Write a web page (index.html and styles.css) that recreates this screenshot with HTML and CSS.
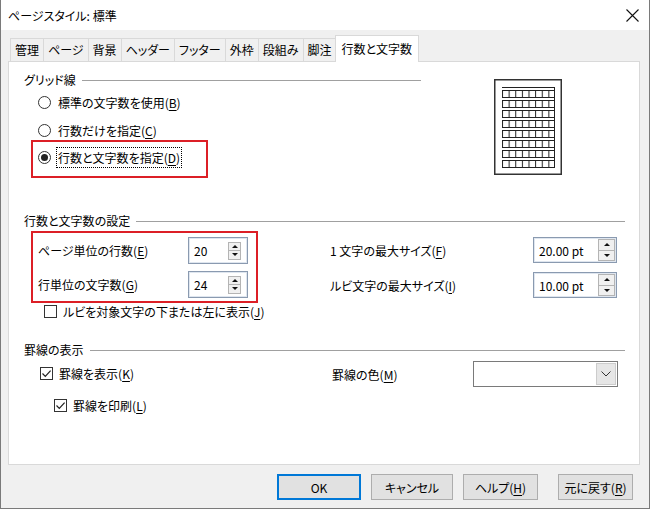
FILE: index.html
```html
<!DOCTYPE html>
<html lang="ja">
  <head>
    <meta charset="utf-8">
    <title>ページスタイル: 標準</title>
    <link rel="stylesheet" href="styles.css">
  </head>
  <body>
    <div class="window">

      <div class="titlebar">
        <span>ページスタイル: 標準</span>
        <svg class="close" width="13" height="13" viewBox="0 0 13 13">
          <path d="M0.5 0.5L12.5 12.5M12.5 0.5L0.5 12.5" stroke="#111" stroke-width="1.1" fill="none"/>
        </svg>
      </div>

      <div class="body">
        <div class="tabs">
          <div class="tab">管理</div>
          <div class="tab">ページ</div>
          <div class="tab">背景</div>
          <div class="tab">ヘッダー</div>
          <div class="tab">フッター</div>
          <div class="tab">外枠</div>
          <div class="tab">段組み</div>
          <div class="tab">脚注</div>
          <div class="tab active">行数と文字数</div>
        </div>

        <div class="panel">

          <!-- grid lines -->
          <div class="grid-group">
            <div class="grid-options">
              <div class="group-title">グリッド線</div>
              <div class="option first">
                <span class="radio"></span>
                <span>標準の文字数を使用(<u>B</u>)</span>
              </div>
              <div class="option">
                <span class="radio"></span>
                <span>行数だけを指定(<u>C</u>)</span>
              </div>
              <div class="callout callout-mode">
                <div class="option">
                  <span class="radio checked"></span>
                  <span class="focus">行数と文字数を指定(<u>D</u>)</span>
                </div>
              </div>
            </div>

            <svg class="preview" width="68" height="96" viewBox="0 0 68 96">
              <defs>
                <pattern id="cell" width="6.625" height="10" patternUnits="userSpaceOnUse" x="8" y="8">
                  <path d="M0 0.5H6.625M0 3.5H6.625M0.5 3.5V10" stroke="#222" stroke-width="1" fill="none"/>
                </pattern>
              </defs>
              <rect x="0.75" y="0.75" width="66.5" height="94.5" fill="#fff" stroke="#333" stroke-width="1.5"/>
              <rect x="8" y="8" width="53" height="80" fill="url(#cell)"/>
              <path d="M60.5 8V89M8 88.5H61" stroke="#222" stroke-width="1" fill="none"/>
            </svg>
          </div>

          <!-- lines and characters -->
          <div class="group-title section">行数と文字数の設定</div>
          <div class="size-row">
            <div class="callout callout-size">
              <div class="field">
                <span class="field-label">ページ単位の行数(<u>E</u>)</span>
                <div class="spin">
                  <span>20</span>
                  <span class="spin-btns"><span class="up"></span><span class="down"></span></span>
                </div>
              </div>
              <div class="field">
                <span class="field-label">行単位の文字数(<u>G</u>)</span>
                <div class="spin">
                  <span>24</span>
                  <span class="spin-btns"><span class="up"></span><span class="down"></span></span>
                </div>
              </div>
            </div>

            <div class="size-right">
              <div class="field">
                <span class="field-label wide">1 文字の最大サイズ(<u>F</u>)</span>
                <div class="spin pt">
                  <span>20.00 pt</span>
                  <span class="spin-btns"><span class="up"></span><span class="down"></span></span>
                </div>
              </div>
              <div class="field">
                <span class="field-label wide">ルビ文字の最大サイズ(<u>I</u>)</span>
                <div class="spin pt">
                  <span>10.00 pt</span>
                  <span class="spin-btns"><span class="up"></span><span class="down"></span></span>
                </div>
              </div>
            </div>
          </div>

          <div class="check-row ruby">
            <span class="checkbox"></span>
            <span>ルビを対象文字の下または左に表示(<u>J</u>)</span>
          </div>

          <!-- ruled lines -->
          <div class="group-title section rules-title">罫線の表示</div>
          <div class="rules">
            <div class="rules-left">
              <div class="check-row show">
                <span class="checkbox">
                  <svg width="11" height="11" viewBox="0 0 11 11"><path d="M1.5 5.5L4.3 8.4L9.6 2.6" stroke="#222" stroke-width="1.2" fill="none"/></svg>
                </span>
                <span>罫線を表示(<u>K</u>)</span>
              </div>
              <div class="check-row print">
                <span class="checkbox">
                  <svg width="11" height="11" viewBox="0 0 11 11"><path d="M1.5 5.5L4.3 8.4L9.6 2.6" stroke="#222" stroke-width="1.2" fill="none"/></svg>
                </span>
                <span>罫線を印刷(<u>L</u>)</span>
              </div>
            </div>
            <div class="rules-right">
              <span class="color-label">罫線の色(<u>M</u>)</span>
              <div class="dropdown">
                <span class="drop-btn">
                  <svg width="10" height="6" viewBox="0 0 10 6"><path d="M0.5 0.5L5 5L9.5 0.5" stroke="#333" stroke-width="1" fill="none"/></svg>
                </span>
              </div>
            </div>
          </div>

        </div>

        <div class="buttons">
          <div class="btn default">OK</div>
          <div class="btn cancel">キャンセル</div>
          <div class="btn">ヘルプ(<u>H</u>)</div>
          <div class="btn reset">元に戻す(<u>R</u>)</div>
        </div>
      </div>

    </div>
  </body>
</html>
```

FILE: styles.css
```css
  body {
    margin: 0;
    font-family: "Noto Sans CJK JP", "Noto Sans", sans-serif;
    font-size: 12px;
    font-feature-settings: "palt";
    color: #000000;
    background: #ffffff;
  }

  u {
    text-decoration-thickness: 1px;
    text-underline-offset: 2px;
  }

  .window {
    width: 650px;
    height: 509px;
    box-sizing: border-box;
    border: 1px solid #7a7a7a;
    border-top: none;
    background: #f0f0f0;
    display: flex;
    flex-direction: column;
  }

  .titlebar {
    height: 30px;
    background: #ffffff;
    display: flex;
    align-items: center;
    justify-content: space-between;
    padding: 0 10px 0 7px;
  }

  .close {
    display: block;
  }

  /* tabs */

  .tabs {
    height: 31px;
    margin-left: 9px;
    display: flex;
    align-items: flex-end;
  }

  .tab {
    height: 23px;
    box-sizing: border-box;
    line-height: 21px;
    padding: 0 4px;
    border: 1px solid #d9d9d9;
    border-bottom: none;
    margin-right: -1px;
    background: #f0f0f0;
    white-space: nowrap;
  }

  .tab.active {
    position: relative;
    z-index: 1;
    height: 27px;
    line-height: 25px;
    margin: 0 -2px -1px -1px;
    padding: 0 6px;
    background: #ffffff;
  }

  /* panel */

  .panel {
    width: 632px;
    height: 404px;
    margin-left: 7px;
    box-sizing: border-box;
    border: 1px solid #d9d9d9;
    background: #ffffff;
    padding: 10px 14px 0 15px;
  }

  .group-title {
    display: flex;
    align-items: center;
    height: 16px;
    line-height: 16px;
    white-space: nowrap;
  }

  .group-title::after {
    content: "";
    flex: 1;
    border-top: 1px solid #a0a0a0;
    margin-left: 6px;
  }

  .grid-group {
    display: flex;
  }

  .grid-options {
    width: 397px;
  }

  .preview {
    display: block;
    margin: 7px 0 0 73px;
  }

  .option {
    display: flex;
    align-items: center;
    height: 20px;
    padding-left: 14px;
    margin-top: 8px;
  }

  .option.first {
    margin-top: 4px;
  }

  .radio {
    width: 13px;
    height: 13px;
    box-sizing: border-box;
    border: 1px solid #333333;
    border-radius: 50%;
    background: #ffffff;
    margin-right: 7px;
    display: flex;
    align-items: center;
    justify-content: center;
    flex-shrink: 0;
  }

  .radio.checked::before {
    content: "";
    width: 7px;
    height: 7px;
    border-radius: 50%;
    background: #222222;
  }

  .focus {
    outline: 1px dotted #000000;
    outline-offset: 1px;
  }

  .callout {
    border: 2px solid #dc1f26;
    margin-left: 7px;
    box-sizing: border-box;
  }

  .callout-mode {
    width: 177px;
    padding: 5px 0 9px 5px;
  }

  .callout-mode .option {
    margin-top: 0;
    padding-left: 0;
  }

  .section {
    margin-top: 35px;
  }

  .size-row {
    display: flex;
    margin-top: 2px;
  }

  .callout-size {
    width: 227px;
    padding: 4px 8px 3px 5px;
  }

  .field {
    display: flex;
    align-items: center;
  }

  .callout-size .field + .field {
    margin-top: 7px;
  }

  .field-label {
    width: 150px;
    white-space: nowrap;
  }

  .field-label.wide {
    width: 203px;
  }

  .size-right {
    margin-left: 72px;
    padding-top: 6px;
  }

  .size-right .field + .field {
    margin-top: 9px;
  }

  .spin {
    width: 60px;
    height: 27px;
    box-sizing: border-box;
    border: 1px solid #8a9ab0;
    box-shadow: inset 0 0 0 1px #dfe6ef;
    background: #ffffff;
    display: flex;
    align-items: center;
    justify-content: space-between;
    padding: 0 6px 0 5px;
  }

  .spin.pt {
    width: 84px;
    height: 26px;
    padding-right: 1px;
  }

  .spin-btns {
    width: 13px;
    height: 18px;
    box-sizing: border-box;
    border: 1px solid #b4b4b4;
    background: #f0f0f0;
    display: flex;
    flex-direction: column;
  }

  .spin.pt .spin-btns {
    width: 17px;
    height: 22px;
  }

  .spin-btns span {
    flex: 1;
    display: flex;
    align-items: center;
    justify-content: center;
  }

  .spin-btns span + span {
    border-top: 1px solid #b4b4b4;
  }

  .up::before {
    content: "";
    border-left: 3px solid transparent;
    border-right: 3px solid transparent;
    border-bottom: 3px solid #111111;
  }

  .down::before {
    content: "";
    border-left: 3px solid transparent;
    border-right: 3px solid transparent;
    border-top: 3px solid #111111;
  }

  .check-row {
    display: flex;
    align-items: center;
    height: 20px;
  }

  .checkbox {
    width: 13px;
    height: 13px;
    box-sizing: border-box;
    border: 1px solid #333333;
    background: #ffffff;
    margin-right: 6px;
    display: flex;
    align-items: center;
    justify-content: center;
    flex-shrink: 0;
  }

  .checkbox svg {
    display: block;
  }

  .ruby {
    margin-top: -2px;
    padding-left: 20px;
  }

  .rules-title {
    margin-top: 21px;
  }

  .rules {
    display: flex;
  }

  .rules-left {
    width: 308px;
  }

  .show {
    margin-top: 5px;
    padding-left: 16px;
  }

  .print {
    margin-top: 12px;
    padding-left: 30px;
  }

  .rules-right {
    display: flex;
    align-items: center;
    margin-top: 3px;
    height: 26px;
  }

  .color-label {
    width: 141px;
  }

  .dropdown {
    width: 145px;
    height: 26px;
    box-sizing: border-box;
    border: 1px solid #7a7a7a;
    background: #ffffff;
    display: flex;
    justify-content: flex-end;
    padding: 1px;
  }

  .drop-btn {
    width: 20px;
    box-sizing: border-box;
    border: 1px solid #cccccc;
    background: #e6e6e6;
    display: flex;
    align-items: center;
    justify-content: center;
  }

  /* buttons */

  .buttons {
    display: flex;
    justify-content: flex-end;
    margin-top: 9px;
    padding-right: 16px;
    gap: 10px;
  }

  .btn {
    width: 75px;
    height: 26px;
    box-sizing: border-box;
    border: 1px solid #adadad;
    background: #e1e1e1;
    display: flex;
    align-items: center;
    justify-content: center;
    white-space: nowrap;
  }

  .btn.default {
    width: 84px;
    border: 2px solid #0078d7;
  }

  .btn.cancel {
    width: 82px;
  }

  .btn.reset {
    margin-left: 10px;
  }
```
